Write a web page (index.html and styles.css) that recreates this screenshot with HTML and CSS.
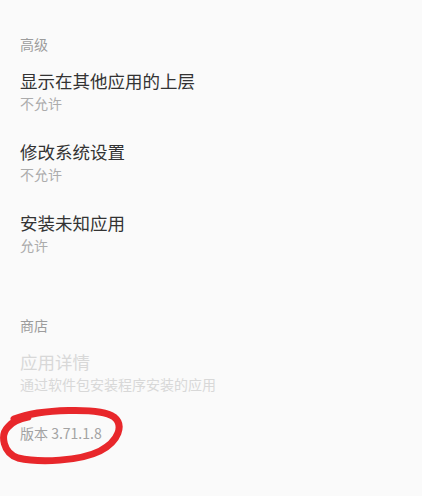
FILE: index.html
```html
<!DOCTYPE html>
<html lang="zh-CN">
<head>
<meta charset="utf-8">
<link rel="stylesheet" href="styles.css">
</head>
<body>
<div class="page">
  <section class="section">
    <div class="section-title">高级</div>
    <div class="item">
      <div class="item-title">显示在其他应用的上层</div>
      <div class="item-sub">不允许</div>
    </div>
    <div class="item">
      <div class="item-title">修改系统设置</div>
      <div class="item-sub">不允许</div>
    </div>
    <div class="item">
      <div class="item-title">安装未知应用</div>
      <div class="item-sub">允许</div>
    </div>
  </section>
  <section class="section">
    <div class="section-title">商店</div>
    <div class="item disabled">
      <div class="item-title">应用详情</div>
      <div class="item-sub">通过软件包安装程序安装的应用</div>
    </div>
  </section>
  <div class="version">
    <span>版本 3.71.1.8</span>
    <svg class="circle" width="130" height="70" viewBox="0 0 130 70">
      <path d="M14 14 C40 4, 100 2, 114 12 C124 20, 119 36, 100 46 C80 56, 40 58, 18 53 C3 48, 0 30, 8 22 C12 17, 18 14, 28 12" fill="none" stroke="#e8272b" stroke-width="7" stroke-linecap="round" stroke-linejoin="round"/>
    </svg>
  </div>
</div>
</body>
</html>
```
FILE: styles.css
```css
html, body {
  margin: 0;
  padding: 0;
  background: #fafafa;
}
body {
  font-family: "Noto Sans CJK SC", "Noto Sans", "Liberation Sans", sans-serif;
}
.page {
  box-sizing: border-box;
  min-height: 100vh;
  padding: 34px 20px 40px 20px;
  display: flex;
  flex-direction: column;
}
.section {
  display: flex;
  flex-direction: column;
}
.section + .section {
  margin-top: 60px;
}
.section-title {
  font-size: 14px;
  line-height: 20px;
  color: #9c9c9c;
  margin-bottom: 15px;
}
.item {
  display: flex;
  flex-direction: column;
}
.item + .item {
  margin-top: 27px;
}
.item-title {
  font-size: 17.5px;
  line-height: 24px;
  color: #333333;
}
.item-sub {
  font-size: 14px;
  line-height: 20px;
  color: #acacac;
}
.disabled .item-title {
  color: #d8d8d8;
}
.disabled .item-sub {
  color: #d8d8d8;
}
.version {
  position: relative;
  margin-top: 29px;
  font-size: 14px;
  line-height: 20px;
  color: #a3a3a3;
}
.circle {
  position: absolute;
  left: -20px;
  top: -18px;
  overflow: visible;
}
```
